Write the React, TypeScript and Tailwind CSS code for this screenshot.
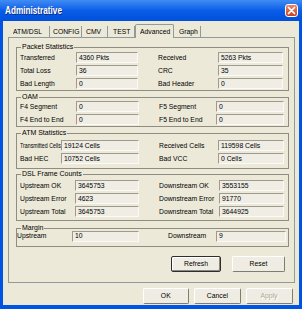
import React from 'react';

type RowData = [string, string, string, string];

const Txt: React.FC<{ children: React.ReactNode; tight?: boolean }> = ({ children, tight }) => (
  <span
    className={`inline-block whitespace-nowrap origin-left ${tight ? 'scale-x-[0.66]' : 'scale-x-[0.85]'}`}
  >
    {children}
  </span>
);

const Field: React.FC<{ value: string; w: string }> = ({ value, w }) => (
  <div
    className={`${w} shrink-0 h-[11px] flex items-center pl-[2px] overflow-hidden border border-t-[#9d9b8f] border-l-[#9d9b8f] border-b-[#fbfaf6] border-r-[#fbfaf6] bg-[#efede4]`}
  >
    <Txt>{value}</Txt>
  </div>
);

const Row: React.FC<{ row: RowData; cols: string[]; h?: string }> = ({ row, cols, h = 'h-[13px]' }) => (
  <div className={`flex items-center ${h}`}>
    <div className={`${cols[0]} shrink-0`}>
      <Txt tight={row[0] === 'Transmitted Cells'}>{row[0]}</Txt>
    </div>
    <Field w={cols[1]} value={row[1]} />
    <div className={`${cols[2]} shrink-0`} />
    <div className={`${cols[3]} shrink-0`}>
      <Txt>{row[2]}</Txt>
    </div>
    <Field w={cols[4]} value={row[3]} />
  </div>
);

const Group: React.FC<{
  title: string;
  cols: string[];
  rows: RowData[];
  className: string;
  bodyClass: string;
  rowH?: string;
}> = ({ title, cols, rows, className, bodyClass, rowH }) => (
  <fieldset className={`ml-[7px] mr-[5px] border border-[#8f8d82] ${className}`}>
    <legend className="ml-[4px] px-[1px] text-[7px] leading-[8px]">{title}</legend>
    <div className={bodyClass}>
      {rows.map((r) => (
        <Row key={r[0]} row={r} cols={cols} h={rowH} />
      ))}
    </div>
  </fieldset>
);

const Btn: React.FC<{ label: string; w: string; focused?: boolean; disabled?: boolean }> = ({
  label,
  w,
  focused,
  disabled,
}) => (
  <div
    className={`${w} h-[16px] flex items-center justify-center rounded-[2px] bg-[#efede3] ${
      focused
        ? 'border border-[#2e2e2e] shadow-[inset_-1px_-1px_0_#8a8880,inset_1px_1px_0_#fff]'
        : 'border border-t-white border-l-white border-r-[#7f7d72] border-b-[#7f7d72]'
    }`}
  >
    <span
      className={`inline-block whitespace-nowrap origin-center scale-x-[0.85] ${
        disabled ? 'text-[#aca899] [text-shadow:1px_1px_0_#fff]' : ''
      }`}
    >
      {label}
    </span>
  </div>
);

const tabs = [
  { label: 'ATM/DSL', w: 'w-[40px]', pl: 'pl-[3px]' },
  { label: 'CONFIG', w: 'w-[32px]', pl: 'pl-[3px]' },
  { label: 'CMV', w: 'w-[26px]', pl: 'pl-[4px]' },
  { label: 'TEST', w: 'w-[27px]', pl: 'pl-[5px]' },
  { label: 'Advanced', w: 'w-[39px]', pl: 'pl-[4px]', active: true },
  { label: 'Graph', w: 'w-[27px]', pl: 'pl-[5px]' },
];

const packetCols = ['w-[56px]', 'w-[62px]', 'w-[20px]', 'w-[60px]', 'w-[65px]'];
const oamCols = ['w-[56px]', 'w-[63px]', 'w-[20px]', 'w-[57px]', 'w-[68px]'];
const atmCols = ['w-[41px]', 'w-[78px]', 'w-[20px]', 'w-[59px]', 'w-[66px]'];
const dslCols = ['w-[55px]', 'w-[64px]', 'w-[20px]', 'w-[60px]', 'w-[65px]'];
const marginCols = ['w-[55px]', 'w-[67px]', 'w-[29px]', 'w-[48px]', 'w-[70px]'];

const App: React.FC = () => {
  return (
    <div className="w-[302px] h-[309px] flex flex-col bg-[#0054e3] font-['Liberation_Sans',Arial,sans-serif] text-[8px] leading-[10px] text-black">
      {/* Title bar */}
      <div className="h-[21px] shrink-0 flex items-center justify-between pl-[5px] pr-[4px] bg-gradient-to-b from-[#3f8cf3] via-[#0a5de8] to-[#0050dc]">
        <span className="inline-block origin-left scale-x-[0.82] text-[10px] font-bold text-white [text-shadow:1px_1px_0_#0b2a7a]">
          Administrative
        </span>
        <div className="w-[13px] h-[13px] rounded-[3px] border border-white bg-gradient-to-b from-[#e9876a] to-[#c8401f] flex items-center justify-center">
          <svg width="9" height="9" viewBox="0 0 9 9">
            <path d="M1.5 1.5 L7.5 7.5 M7.5 1.5 L1.5 7.5" stroke="#fff" strokeWidth="1.7" strokeLinecap="round" />
          </svg>
        </div>
      </div>

      {/* Body */}
      <div className="flex-1 mx-[3px] mb-[4px] bg-[#ece9d8] flex flex-col">
        {/* Tabs */}
        <div className="flex items-end h-[13px] mt-[3px] ml-[7px]">
          {tabs.map((t) =>
            t.active ? (
              <div
                key={t.label}
                className={`${t.w} ${t.pl} h-[14px] -mb-px relative z-10 flex items-center border border-b-0 border-[#919b9c] rounded-t-[2px] bg-[#ece9d8]`}
              >
                <Txt>{t.label}</Txt>
              </div>
            ) : (
              <div key={t.label} className={`${t.w} ${t.pl} h-[11px] flex items-center border-r border-[#919b9c]`}>
                <Txt>{t.label}</Txt>
              </div>
            )
          )}
        </div>

        {/* Tab panel */}
        <div className="ml-[5px] mr-[4px] border border-[#919b9c] pb-[10px]">
          <Group
            title="Packet Statistics"
            cols={packetCols}
            className="mt-[5px]"
            bodyClass="pl-[3px]"
            rows={[
              ['Transferred', '4360 Pkts', 'Received', '5263 Pkts'],
              ['Total Loss', '36', 'CRC', '35'],
              ['Bad Length', '0', 'Bad Header', '0'],
            ]}
          />
          <Group
            title="OAM"
            cols={oamCols}
            className="mt-[2px]"
            bodyClass="pl-[3px] -mt-[1px]"
            rows={[
              ['F4 Segment', '0', 'F5 Segment', '0'],
              ['F4 End to End', '0', 'F5 End to End', '0'],
            ]}
          />
          <Group
            title="ATM Statistics"
            cols={atmCols}
            className="mt-[2px]"
            bodyClass="pl-[3px] pt-[2px] pb-[3px]"
            rows={[
              ['Transmitted Cells', '19124 Cells', 'Received Cells', '119598 Cells'],
              ['Bad HEC', '10752 Cells', 'Bad VCC', '0 Cells'],
            ]}
          />
          <Group
            title="DSL Frame Counts"
            cols={dslCols}
            className="mt-[1px]"
            bodyClass="pl-[3px] pt-[1px] pb-[2px]"
            rows={[
              ['Upstream OK', '3645753', 'Downstream OK', '3553155'],
              ['Upstream Error', '4623', 'Downstream Error', '91770'],
              ['Upstream Total', '3645753', 'Downstream Total', '3644925'],
            ]}
          />
          <Group
            title="Margin"
            cols={marginCols}
            className="mt-[3px]"
            bodyClass="-mt-[2px] pb-[4px]"
            rowH="h-[12px]"
            rows={[['Upstream', '10', 'Downstream', '9']]}
          />

          <div className="flex justify-end gap-[11px] mt-[9px] mr-[9px]">
            <Btn label="Refresh" w="w-[50px]" focused />
            <Btn label="Reset" w="w-[53px]" />
          </div>
        </div>

        {/* Dialog buttons */}
        <div className="flex justify-end gap-[5px] mt-[5px] mr-[6px]">
          <Btn label="OK" w="w-[46px]" />
          <Btn label="Cancel" w="w-[47px]" />
          <Btn label="Apply" w="w-[47px]" disabled />
        </div>
      </div>
    </div>
  );
};

export default App;
